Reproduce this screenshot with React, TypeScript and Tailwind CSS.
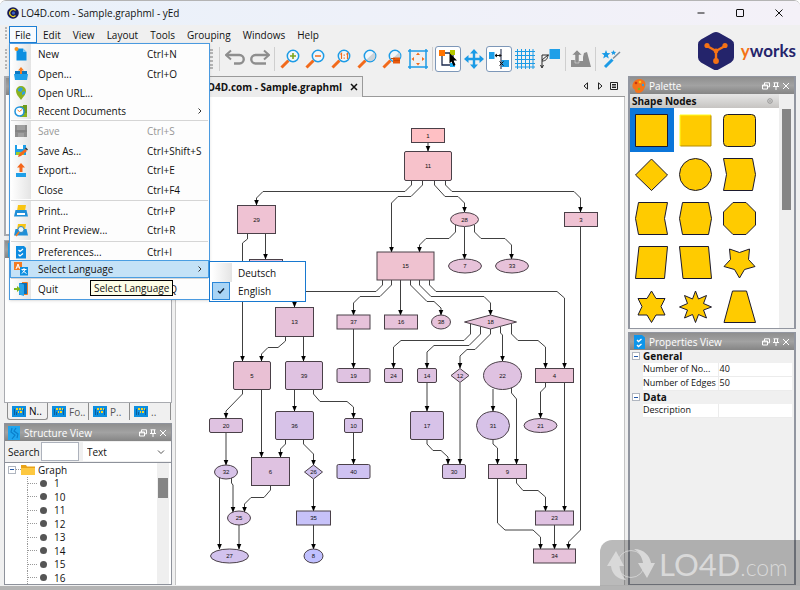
import { ReactNode } from "react";

type Shape = "rect" | "round" | "ellipse" | "diamond";

type GraphNode = {
  id: string;
  shape: Shape;
  x: number;
  y: number;
  w: number;
  h: number;
  fill: string;
};

// x and y are the centre of the node
const node = (
  id: string,
  shape: Shape,
  x: number,
  y: number,
  w: number,
  h: number,
  fill: string
): GraphNode => ({ id, shape, x, y, w, h, fill });

const NODES: GraphNode[] = [
  node("1", "rect", 428, 135.5, 33, 14, "#ffc0c4"),
  node("11", "round", 428, 166, 47, 29, "#f7c2cb"),
  node("29", "rect", 256.5, 219.5, 38, 28, "#efc2d3"),
  node("28", "ellipse", 464.5, 219.5, 28, 14, "#efc2d3"),
  node("3", "rect", 581, 219.5, 33, 14, "#efc2d3"),
  node("2", "rect", 266, 266.5, 33, 14, "#e7c2da"),
  node("15", "rect", 405.5, 266, 57, 28, "#efc2d0"),
  node("7", "ellipse", 465, 266, 33, 14, "#e7c2da"),
  node("33", "ellipse", 512, 266, 33, 14, "#e7c2da"),
  node("13", "rect", 294.5, 322, 38, 29, "#e7c2da"),
  node("37", "rect", 353.5, 322, 33, 14, "#e7c2da"),
  node("16", "rect", 401, 322, 33, 14, "#e7c2da"),
  node("38", "ellipse", 441, 322, 19, 14, "#e7c2da"),
  node("18", "diamond", 490.5, 322, 52, 14, "#e7c2da"),
  node("5", "round", 252, 375.5, 37, 28, "#e9c0d4"),
  node("39", "round", 304, 375.5, 37, 28, "#dfc2e1"),
  node("19", "round", 353.5, 375.5, 33, 14, "#dfc2e1"),
  node("24", "round", 393.5, 375.5, 18, 14, "#dfc2e1"),
  node("14", "round", 427, 375.5, 19, 14, "#dfc2e1"),
  node("12", "diamond", 460, 375.5, 18, 14, "#dfc2e1"),
  node("22", "ellipse", 502.5, 375.5, 38, 28, "#dfc2e1"),
  node("4", "rect", 554.5, 375.5, 38, 14, "#e9c0d4"),
  node("20", "round", 226, 425.5, 33, 14, "#dfc2e1"),
  node("36", "round", 294.5, 425.5, 38, 28, "#d7c2e8"),
  node("10", "round", 353.5, 425.5, 18, 14, "#d7c2e8"),
  node("17", "round", 427, 425.5, 33, 28, "#d7c2e8"),
  node("31", "ellipse", 493, 425.5, 33, 28, "#d7c2e8"),
  node("21", "ellipse", 540.5, 425.5, 33, 14, "#dfc2e1"),
  node("32", "ellipse", 226, 472, 23, 14, "#d7c2e8"),
  node("6", "rect", 270.5, 471.5, 38, 28, "#dfc2e1"),
  node("26", "diamond", 313.5, 472, 18, 14, "#d0c2ef"),
  node("40", "round", 353.5, 471.5, 33, 14, "#cfc2f2"),
  node("30", "round", 454, 471.5, 23, 14, "#d7c2e8"),
  node("9", "rect", 507.5, 471.5, 38, 14, "#e3c2de"),
  node("25", "ellipse", 239, 518, 23, 14, "#d9c2e6"),
  node("35", "rect", 313.5, 518, 34, 14, "#c7c2f9"),
  node("23", "rect", 554.5, 518, 38, 14, "#e0c2e2"),
  node("27", "ellipse", 229.5, 556, 38, 14, "#d2c2ed"),
  node("8", "ellipse", 313.5, 556, 19, 14, "#c0c0ff"),
  node("34", "rect", 554.5, 556, 42, 14, "#e7c2da"),
];

const EDGES = [
  "428,143 428,151",
  "411.5,181 411.5,185 405,191.5 263,191.5 256.5,198 256.5,205",
  "422.5,181 422.5,185 411,196.5 398,196.5 391.5,203 391.5,252",
  "434.5,181 434.5,185 445,196.5 458,196.5 464.5,203 464.5,212",
  "445.5,181 445.5,185 452,191.5 574,191.5 580.5,198 580.5,212",
  "455.5,225 455.5,232 449,238.5 426,238.5 419.5,245 419.5,252",
  "464.5,227 464.5,259",
  "474.5,225 474.5,232 481,238.5 505,238.5 511.5,245 511.5,259",
  "247.5,234 247.5,239 242.5,243 242.5,361",
  "265.5,234 265.5,259",
  "382.5,280 382.5,285 376,291.5 301,291.5 294.5,298 294.5,307",
  "391.5,280 391.5,285 380,296.5 360,296.5 353.5,303 353.5,315",
  "400.5,280 400.5,315",
  "410.5,280 410.5,285 427,301.5 434,301.5 441,308 441,315",
  "419.5,280 419.5,285 431,296.5 484,296.5 490.5,303 490.5,315",
  "429.5,280 429.5,285 436,291.5 557,291.5 564.5,298 564.5,368",
  "580.5,227 580.5,530 568.5,542 568.5,549",
  "285.5,337 285.5,341 278,347.5 268,347.5 261.5,354 261.5,361",
  "303.5,337 303.5,361",
  "353.5,329 353.5,368",
  "470.5,324 470.5,334 464,340.5 401,340.5 393.5,347 393.5,368",
  "480.5,327 480.5,334 469,345.5 434,345.5 427,352 427,368",
  "490.5,329 490.5,334 475,349.5 467,349.5 460,356 460,368",
  "500.5,327 500.5,333 502.5,335 502.5,361",
  "511.5,324 511.5,334 518,340.5 538,340.5 545.5,347 545.5,368",
  "242.5,390 242.5,394 226,411 226,418",
  "261.5,390 261.5,457",
  "294.5,390 294.5,411",
  "313.5,390 313.5,394 320,401.5 347,401.5 353.5,407 353.5,418",
  "226,433 226,465",
  "219.5,478 219.5,549",
  "231.5,478 231.5,483 233,485 233,512",
  "285.5,440 285.5,444 280.5,449 280.5,457",
  "303.5,440 303.5,444 313.5,454 313.5,465",
  "353.5,433 353.5,464",
  "313.5,479 313.5,511",
  "270.5,486 270.5,490 264,497.5 251,497.5 244.5,504 244.5,512",
  "239,525 239,549",
  "313.5,525 313.5,549",
  "427,383 427,411",
  "460,383 460,464",
  "427,440 427,444 433,450.5 441,450.5 448,457 448,464",
  "493,389 493,411",
  "511.5,388 511.5,393 516.5,399 516.5,464",
  "493,440 493,444 497.5,448 497.5,464",
  "545.5,383 545.5,387 540.5,392 540.5,418",
  "564.5,383 564.5,511",
  "497.5,479 497.5,523 505,530 533,530 540.5,537 540.5,549",
  "516.5,479 516.5,483 523,490.5 538,490.5 545.5,497 545.5,511",
  "554.5,525 554.5,549",
];

function NodeShape({ n }: { n: GraphNode }) {
  const common = { fill: n.fill, stroke: "#4a4048", strokeWidth: 1 };
  if (n.shape === "ellipse") {
    return <ellipse cx={n.x} cy={n.y} rx={n.w / 2} ry={n.h / 2} {...common} />;
  }
  if (n.shape === "diamond") {
    const hw = n.w / 2;
    const hh = n.h / 2;
    return (
      <path
        d={`M${n.x} ${n.y - hh} L${n.x + hw} ${n.y} L${n.x} ${n.y + hh} L${n.x - hw} ${n.y}Z`}
        {...common}
      />
    );
  }
  return (
    <rect
      x={n.x - n.w / 2}
      y={n.y - n.h / 2}
      width={n.w}
      height={n.h}
      rx={n.shape === "round" ? 1.5 : 0}
      {...common}
    />
  );
}

function GraphCanvas() {
  return (
    <svg viewBox="176 97 448 484" className="block w-[448px] h-[484px] shrink-0">
      <defs>
        <marker
          id="arrow"
          markerWidth="7"
          markerHeight="7"
          refX="5.5"
          refY="3"
          orient="auto"
          markerUnits="userSpaceOnUse"
        >
          <path d="M0 0.5 L6 3 L0 5.5Z" fill="#000" />
        </marker>
      </defs>
      {EDGES.map((points) => (
        <polyline
          key={points}
          points={points}
          fill="none"
          stroke="#404040"
          strokeWidth="1"
          markerEnd="url(#arrow)"
        />
      ))}
      {NODES.map((n) => (
        <g key={n.id}>
          <NodeShape n={n} />
          <text
            x={n.x}
            y={n.y + 2}
            textAnchor="middle"
            fill="#111"
            className="font-['Liberation_Sans',sans-serif] text-[6px]"
          >
            {n.id}
          </text>
        </g>
      ))}
    </svg>
  );
}

/* ---------- menu ---------- */

function MenuIcon({ name }: { name: string }) {
  const icons: Record<string, ReactNode> = {
    new: (
      <>
        <path d="M2.500 1.500H9L12.500 5v8.500h-10z" fill="#0d8fe0" />
        <path d="M9 1.500L12.500 5H9z" fill="#7cc8f5" />
        <circle cx="2.500" cy="2" r="2" fill="#f7941d" />
      </>
    ),
    open: (
      <>
        <path d="M1 4h12v9H1z" fill="#0a78c2" />
        <path d="M0 7h14l-1 6H1z" fill="#1f9fe8" />
        <path d="M7 0l3 3.500H8V7H6V3.500H4z" fill="#f47b20" />
      </>
    ),
    url: (
      <>
        <path d="M7 14C4 10 2 8 2 5a5 5 0 0 1 10 0c0 3-2 5-5 9z" fill="#8bb21f" />
        <path d="M4 3l3-2 2 2-2 3-3-1z" fill="#2f9fe0" />
        <path d="M8 6l3-1v3L8 9z" fill="#2f9fe0" />
      </>
    ),
    recent: (
      <>
        <path d="M6 2h4l3 2v9H6z" fill="#8bb21f" />
        <path d="M9 1h4v8H9z" fill="#6c9a1b" />
        <circle cx="5.500" cy="7.500" r="4.500" fill="#fff" stroke="#1f93dc" strokeWidth="1.500" />
        <path d="M3.500 6l2 1.500L8 5.500" fill="none" stroke="#f47b20" />
      </>
    ),
    save: (
      <>
        <path d="M1 1h12v12H1z" fill="#8d8d8d" />
        <path d="M3 1h8v5H3zM4 9h6v4H4z" fill="#a0a0a0" />
        <path d="M1 7h12" stroke="#7b7b7b" />
      </>
    ),
    saveas: (
      <>
        <path d="M1 1h11v10H1z" fill="#1f9fe8" />
        <path d="M3 1h6v4H3z" fill="#fff" />
        <path d="M2 8h8v3H2z" fill="#9ccb2b" />
        <path d="M4 13l1-3 6-5 2 2-6 5z" fill="#f4661b" />
        <path d="M11 4.500l1-1 2 2-1 1z" fill="#333" />
      </>
    ),
    export: (
      <>
        <path d="M2 10h10v4H2z" fill="#1f9fe8" />
        <path d="M7 0l4 4.500H8.500V9h-3V4.500H3z" fill="#f4661b" />
      </>
    ),
    print: (
      <>
        <path d="M4 1h8l-1 6H3z" fill="#f9c513" />
        <path d="M1.500 6h11l1.500 6.500H0z" fill="#1f8fd8" />
        <path d="M3 9h8v2H3z" fill="#fff" />
      </>
    ),
    preview: (
      <>
        <path d="M4 1h8l-1 6H3z" fill="#f9c513" />
        <path d="M1.500 6h11l1.500 6.500H0z" fill="#1f8fd8" />
        <circle cx="7" cy="6.500" r="3" fill="#e9f5fc" stroke="#2f86bd" />
        <path d="M5 9l-3 4" stroke="#f47b20" strokeWidth="1.500" />
      </>
    ),
    prefs: (
      <>
        <path d="M2 1h8l2 2v10.500H2z" fill="#0c8be0" />
        <path d="M4.500 5l1.500 1.500L9 4M4.500 9.500L6 11l3-2.500" fill="none" stroke="#fff" strokeWidth="1.200" />
      </>
    ),
    language: (
      <>
        <path d="M0 0h8v8H0z" fill="#f47b20" />
        <path d="M2 7l2-5 2 5M3 5h2" stroke="#fff" fill="none" />
        <path d="M6 5h8v8.500H6z" fill="#0d8fe0" />
        <path d="M7.500 7.500h5M10 6v1.500M8 11.500l3.500-4M8.500 8.500l4 3" stroke="#fff" fill="none" />
      </>
    ),
    quit: (
      <>
        <path d="M5 1h8v12H5z" fill="#0a6fb5" />
        <path d="M5 1l5 1.500V14L5 12.500z" fill="#29a4ea" />
        <path d="M8 .5h5.500v12H10" fill="none" stroke="#f47b20" />
        <path d="M0 6h3V4l3.500 3L3 10V8H0z" fill="#7fb61c" />
      </>
    ),
  };
  return (
    <svg viewBox="0 0 14 14" className="size-[14px]" aria-hidden="true">
      {icons[name]}
    </svg>
  );
}

function Chevron({ className }: { className: string }) {
  return (
    <svg viewBox="0 0 8 8" className={className} aria-hidden="true">
      <path d="M2.500 1.500l2.500 2.500-2.500 2.500" fill="none" stroke="#333" />
    </svg>
  );
}

type Item = {
  label: string;
  keys?: string;
  icon?: string;
  height: string;
  disabled?: boolean;
  sub?: boolean;
  active?: boolean;
};

const FILE_MENU: (Item | "sep")[] = [
  { label: "New", keys: "Ctrl+N", icon: "new", height: "h-[20px]" },
  { label: "Open...", keys: "Ctrl+O", icon: "open", height: "h-[19px]" },
  { label: "Open URL...", icon: "url", height: "h-[20px]" },
  { label: "Recent Documents", icon: "recent", height: "h-[16px]", sub: true },
  "sep",
  { label: "Save", keys: "Ctrl+S", icon: "save", height: "h-[20px]", disabled: true },
  { label: "Save As...", keys: "Ctrl+Shift+S", icon: "saveas", height: "h-[19px]" },
  { label: "Export...", keys: "Ctrl+E", icon: "export", height: "h-[20px]" },
  { label: "Close", keys: "Ctrl+F4", height: "h-[19px]" },
  "sep",
  { label: "Print...", keys: "Ctrl+P", icon: "print", height: "h-[19px]" },
  { label: "Print Preview...", keys: "Ctrl+R", icon: "preview", height: "h-[20px]" },
  "sep",
  { label: "Preferences...", keys: "Ctrl+I", icon: "prefs", height: "h-[19px]" },
  { label: "Select Language", icon: "language", height: "h-[16px]", sub: true, active: true },
  "sep",
  { label: "Quit", keys: "Ctrl+Q", icon: "quit", height: "h-[20px]" },
];

function LanguageMenu() {
  return (
    <div className="absolute left-[198px] top-0 z-30 w-[97px] border border-[#1879d0] bg-white py-px">
      <button className="flex h-[19px] w-full items-center">
        <span className="ml-0.5 h-full w-[20px] bg-linear-to-r from-white to-[#e4e4e4]" />
        <span className="pl-1.5">Deutsch</span>
      </button>
      <button className="flex h-[18px] w-full items-center">
        <span className="ml-0.5 flex h-full w-[18px] items-center justify-center border border-[#2a86d8] bg-[#a9d4f5]">
          <svg viewBox="0 0 8 8" className="size-2" aria-hidden="true">
            <path d="M1 4l2 2 4-4.500" fill="none" stroke="#12243a" strokeWidth="1.400" />
          </svg>
        </span>
        <span className="pl-2">English</span>
      </button>
    </div>
  );
}

function FileMenu() {
  return (
    <div className="absolute left-0 top-full z-20 w-[201px] border border-[#4a9ae0] bg-[#fdfdfd] px-px text-left shadow-sm">
      {FILE_MENU.map((item, i) =>
        item === "sep" ? (
          <div key={i} className="flex h-[2px] items-center">
            <div className="h-px w-full bg-[#d5d5d5]" />
          </div>
        ) : (
          <div key={i} className="relative">
            <button
              disabled={item.disabled}
              className={`flex w-full items-center ${item.height} ${
                item.active ? "bg-[#c4e2f7] outline outline-[#4a9ee2]" : ""
              } ${item.disabled ? "text-[#969696]" : ""}`}
            >
              <span
                className={`flex h-full w-[20px] items-center justify-center ${
                  item.active ? "" : "bg-linear-to-r from-white to-[#e4e4e4]"
                }`}
              >
                {item.icon && <MenuIcon name={item.icon} />}
              </span>
              <span className="w-[116px] pl-[7px] text-left whitespace-nowrap">{item.label}</span>
              <span className="flex-1 text-left whitespace-nowrap">{item.keys}</span>
              {item.sub && <Chevron className="mr-1 size-2" />}
            </button>
            {item.active && <LanguageMenu />}
          </div>
        )
      )}
      <div
        role="tooltip"
        className="absolute bottom-[3px] left-[80px] border border-black bg-[#fdfde6] px-[3px] leading-[14px] whitespace-nowrap"
      >
        Select Language
      </div>
    </div>
  );
}

/* ---------- toolbar ---------- */

function Tool({
  label,
  width = "w-[25px]",
  pressed,
  children,
}: {
  label: string;
  width?: string;
  pressed?: boolean;
  children: ReactNode;
}) {
  return (
    <button
      aria-label={label}
      className={`flex h-[26px] items-center justify-center ${width} ${
        pressed ? "rounded-[3px] border border-[#7d97b8] bg-white" : ""
      }`}
    >
      <svg viewBox="0 0 20 20" className="size-5 shrink-0" fill="none">
        {children}
      </svg>
    </button>
  );
}

function Magnifier({ children }: { children?: ReactNode }) {
  return (
    <>
      <path d="M1.500 18.500L8.500 11.500" stroke="#f26a1b" strokeWidth="3" />
      <circle cx="13" cy="7" r="5.700" fill="#f1f6fa" stroke="#1c9be6" strokeWidth="1.500" />
      {children}
    </>
  );
}

function Separator() {
  return <div className="mx-0.5 h-6 w-px bg-[#cfcfcf]" />;
}

function Toolbar() {
  return (
    <div className="flex h-[32px] items-center pl-[5px]">
      <div className="h-5 w-[204px] border-l-2 border-dotted border-[#b5b5b5]" />
      <div className="h-5 w-1 border-x-2 border-dotted border-[#b5b5b5]" />
      <div className="w-1" />
      <Separator />
      <Tool label="Undo">
        <path d="M2 6h12.500a3.700 3.700 0 0 1 0 8.500H9" stroke="#8e8e8e" strokeWidth="2.400" />
        <path d="M6 1.500L1 6l5 4.500" stroke="#8e8e8e" strokeWidth="2" />
      </Tool>
      <Tool label="Redo">
        <path d="M18 6H5.500a3.700 3.700 0 0 0 0 8.500H16" stroke="#8e8e8e" strokeWidth="2.400" />
        <path d="M14 1.500L19 6l-5 4.500" stroke="#8e8e8e" strokeWidth="2" />
      </Tool>
      <Separator />
      <Tool label="Zoom in">
        <Magnifier>
          <path d="M10 7h6M13 4v6" stroke="#7da51c" strokeWidth="1.600" />
        </Magnifier>
      </Tool>
      <Tool label="Zoom out" width="w-[26px]">
        <Magnifier>
          <path d="M10 7h6" stroke="#f26a1b" strokeWidth="1.600" />
        </Magnifier>
      </Tool>
      <Tool label="Zoom 1:1" width="w-[26px]">
        <Magnifier>
          <path d="M9.500 5.500l1-1v5.500M15.500 5.500l1-1v5.500M13.200 5.500v1.200M13.200 8.500v1.200" stroke="#f26a1b" strokeWidth="1.200" />
        </Magnifier>
      </Tool>
      <Tool label="Zoom">
        <Magnifier>
          <path d="M17 3.500A5 5 0 0 1 9.500 10.500z" fill="#cdd3d8" />
        </Magnifier>
      </Tool>
      <Tool label="Zoom to selection" width="w-[26px]">
        <Magnifier>
          <path d="M17 3.500A5 5 0 0 1 9.500 10.500z" fill="#cdd3d8" />
          <path d="M11 8.500h7v6h-7z" fill="#e8590c" />
          <path d="M9 9.500h4M12 11.500h6" stroke="#c94b08" />
        </Magnifier>
      </Tool>
      <Tool label="Fit content">
        <path d="M2 0v20M18 0v20M0 2h20M0 18h20" stroke="#1c9be6" strokeWidth="1.500" />
        <path
          d="M10 3.500l2 2.500H8zM10 16.500l2-2.500H8zM3.500 10L6 8v4zM16.500 10L14 8v4z"
          fill="#f26a1b"
        />
      </Tool>
      <Separator />
      <Tool label="Edit mode" width="w-[26px]" pressed>
        <path d="M4 4h11v12H4z" stroke="#1d2b4d" strokeWidth="1.300" />
        <path d="M1 1h6v6H1z" fill="#ff7300" />
        <path d="M12 1h5v5h-5z" fill="#b7c800" />
        <path d="M12 14h5v4h-5z" fill="#1fb0f5" />
        <path d="M11.500 4l7.500 7.500h-3.500l2 4.500-2 1-2-4.500-2 2z" fill="#000" />
      </Tool>
      <Tool label="Navigation mode">
        <path d="M10 3v14M3 10h14" stroke="#1c9be6" strokeWidth="2.400" />
        <path
          d="M10 0l4 4.500H6zM10 20l4-4.500H6zM0 10l4.500-4v8zM20 10l-4.500-4v8z"
          fill="#1c9be6"
        />
      </Tool>
      <Tool label="Snap lines" width="w-[26px]" pressed>
        <path d="M0 3h5.500v7H0zM12.500 11H20v7h-7.500z" fill="#1f9fe8" />
        <path d="M12 0v20" stroke="#26314d" strokeWidth="1.100" />
        <path d="M6 6.500h6M8 5l-2 1.500L8 8M10.500 5l1.500 1.500L10.500 8" stroke="#111" />
        <path d="M10.500 12.500l4 4M14.500 12.500l-4 4" stroke="#111" />
      </Tool>
      <Tool label="Grid">
        <path
          d="M2.500 0v20M6.500 0v20M10.500 0v20M14.500 0v20M18 0v20M0 2.500h20M0 6.500h20M0 10.500h20M0 14.500h20M0 18h20"
          stroke="#1c9be6"
        />
      </Tool>
      <Tool label="Orthogonal edges" width="w-[26px]">
        <path d="M9.500 0H20v10H9.500z" fill="#1f9fe8" />
        <path d="M9 6H2v12M.5 16L2 19l1.500-3M2 12c4 0 5.500-2 6-6M2 11l6-5" stroke="#2a2a2a" />
      </Tool>
      <Separator />
      <Tool label="Layout">
        <path d="M0 11h7v7H0zM7 12h6v6H7z" fill="#8d8d8d" />
        <path d="M13 4l3-1 4 15h-8V8z" fill="#8d8d8d" />
        <path d="M6 1l5 5H8v8H4V6H1z" fill="#8d8d8d" stroke="#efefef" strokeWidth="0.500" />
      </Tool>
      <Separator />
      <Tool label="Wizard">
        <path d="M4 18L11.500 10.500" stroke="#1c9be6" strokeWidth="3" />
        <path d="M12 9.500l7-6.500" stroke="#7a8b99" strokeWidth="1.500" />
        <path
          d="M5 1l1.200 3 3.200.2-2.500 2L7.800 9.500 5 7.700 2.200 9.500l.9-3.300-2.500-2L3.800 4zM12.500 1l.8 1.700 1.900.2-1.400 1.300.4 1.900-1.700-1-1.700 1 .4-1.900-1.400-1.300 1.900-.2z"
          fill="#1c9be6"
        />
      </Tool>
    </div>
  );
}

function Logo() {
  return (
    <div className="flex items-center gap-[6px] pr-1">
      <svg viewBox="0 0 38 40" className="h-10 w-[38px]" aria-hidden="true">
        <path
          d="M16 1.800q3-1.700 6 0l12 6.700q3 1.800 3 5v13q0 3.200-3 5l-12 6.700q-3 1.700-6 0l-12-6.700q-3-1.800-3-5v-13q0-3.200 3-5z"
          fill="#24246b"
        />
        <path d="M19 20v10M19 20l-9-5M19 20l9-5" stroke="#f47216" strokeWidth="2.400" />
        <circle cx="10" cy="14.500" r="2.600" fill="#f47216" />
        <circle cx="28" cy="14.500" r="2.600" fill="#f47216" />
        <circle cx="19" cy="30" r="2.900" fill="#f47216" />
        <circle cx="19" cy="20" r="2.400" fill="#f47216" />
      </svg>
      <span className="font-[Lato,sans-serif] text-[17px] leading-6 font-bold text-[#24246b]">
        <span className="text-[#f47216]">y</span>works
      </span>
    </div>
  );
}

/* ---------- docked panels ---------- */

function PanelHeader({ title, icon }: { title: string; icon: ReactNode }) {
  return (
    <div className="flex h-[17px] shrink-0 items-center bg-linear-to-b from-[#8f8f8f] via-[#a2a2a2] to-[#858585] pr-1 pl-[2px] text-white">
      <svg viewBox="0 0 14 14" className="size-[14px] shrink-0" aria-hidden="true">
        {icon}
      </svg>
      <h2 className="flex-1 truncate pl-[3px] text-[10px]">{title}</h2>
      <button aria-label="Float" className="w-[10px]">
        <svg viewBox="0 0 8 8" className="size-2" fill="none" stroke="#fff">
          <path d="M2.500 3V.8h5v4H5.500M.5 3h5v4h-5zM.5 3.800h5" />
        </svg>
      </button>
      <button aria-label="Pin" className="w-[10px]">
        <svg viewBox="0 0 8 8" className="size-2" fill="none" stroke="#fff">
          <path d="M1.500.8h5M2.500 1v3.500M5.500 1v3.500M1 4.500h6M4 4.500V8" />
        </svg>
      </button>
      <button aria-label="Close" className="w-2">
        <svg viewBox="0 0 8 8" className="size-2" fill="none" stroke="#fff">
          <path d="M1 1l6 6M7 1L1 7" />
        </svg>
      </button>
    </div>
  );
}

const networkIcon = (
  <>
    <path d="M1 0h12v14H1z" fill="#1fa5ee" />
    <path d="M5 2l-1 4 4 3-3 4M9 2L7 5l4 3-1 4" stroke="#0a7fcb" fill="none" strokeWidth="1.200" />
  </>
);

const checklistIcon = (
  <>
    <path d="M2 0h8l3 2.500V14H2z" fill="#0d95ea" />
    <path d="M5 5l1.500 1.500L9.500 4M5 10l1.500 1.500L9.500 9" fill="none" stroke="#fff" strokeWidth="1.300" />
  </>
);

const paletteIcon = (
  <>
    <path d="M7.500 0C11 0 14 2.500 13.500 6c-.2 2-1 2.500-1.500 4-.5 2-3 4-6 4-2 0-3-1-3-2.500S1 10 .5 8C0 4 3 0 7.500 0z" fill="#f4731c" />
    <circle cx="4" cy="4" r="1.300" fill="#c9380e" />
    <circle cx="8" cy="3" r="1.300" fill="#f9c513" />
    <circle cx="11" cy="6" r="1.200" fill="#2f9fe0" />
    <circle cx="7" cy="10" r="1.300" fill="#7fb61c" />
  </>
);

const TABS = ["N..", "Fo..", "P..", ".."];

function DockTabs() {
  return (
    <div className="flex h-[20px] items-start pl-[3px]">
      {TABS.map((tab, i) => (
        <button
          key={tab}
          className={`flex h-[17px] w-[41px] shrink-0 items-center gap-[3px] overflow-hidden pl-1 ${
            i === 0
              ? "rounded-b-[3px] border border-t-0 border-[#8d8d8d] text-black"
              : "border-r border-[#8d8d8d] text-[#555]"
          }`}
        >
          <svg viewBox="0 0 14 11" className="h-[11px] w-[14px] shrink-0" aria-hidden="true">
            <path d="M0 0h14v11H0z" fill="#0d8fe0" />
            <path d="M2 3h1v6H2zM4 6h1v3H4zM11 3h1v6h-1z" fill="#0a5f9f" />
            <path d="M4 2h2v2H4zM7 2h2v2H7zM10 2h1v2h-1zM6 5h1v2H6zM8 5h2v2H8z" fill="#f9d423" />
          </svg>
          {tab}
        </button>
      ))}
    </div>
  );
}

const TREE = ["1", "10", "11", "12", "13", "14", "15", "16"];

function StructureView() {
  return (
    <section className="flex h-[162px] flex-col border border-[#8e929b]">
      <PanelHeader title="Structure View" icon={networkIcon} />
      <div className="flex h-[21px] shrink-0 items-center pl-[3px]">
        <label htmlFor="search" className="w-[33px] font-medium">
          Search
        </label>
        <input id="search" className="h-[19px] w-[38px] border border-[#adb2bc] bg-white" />
        <div className="relative ml-1 flex-1">
          <select
            aria-label="Search in"
            className="h-[19px] w-full appearance-none bg-white pl-1 font-medium"
          >
            <option>Text</option>
          </select>
          <svg viewBox="0 0 8 8" className="pointer-events-none absolute top-1.5 right-1.5 size-2">
            <path d="M1 2.500l3 3 3-3" fill="none" stroke="#555" />
          </svg>
        </div>
      </div>
      <div className="flex min-h-0 flex-1 border-t border-[#8e929b] bg-white font-medium">
        <ul className="flex flex-1 flex-col justify-between pl-[3px]">
          <li className="flex h-[13px] items-center">
            <span className="flex size-2 items-center justify-center border border-[#b0b6c0]">
              <span className="h-px w-1 bg-[#2458a8]" />
            </span>
            <span className="w-[5px] border-t border-dotted border-[#999]" />
            <svg viewBox="0 0 14 12" className="h-3 w-[14px]" aria-hidden="true">
              <path d="M0 1h5l1 1.500h8V11H0z" fill="#e9a318" />
              <path d="M0 4h14v7H0z" fill="#fdc840" />
            </svg>
            <span className="pl-[3px]">Graph</span>
          </li>
          {TREE.map((id) => (
            <li key={id} className="ml-[19px] flex h-[13px] items-center border-l border-dotted border-[#999]">
              <span className="w-[9px] border-t border-dotted border-[#999]" />
              <span className="ml-[3px] size-[7px] rounded-full bg-[#555]" />
              <span className="pl-[7px]">{id}</span>
            </li>
          ))}
        </ul>
        <div className="mr-0.5 w-3 bg-[#efefef] px-px pt-[15px]">
          <div className="h-5 bg-[#858585]" />
        </div>
      </div>
    </section>
  );
}

function LeftDock() {
  return (
    <aside className="flex w-[168px] shrink-0 flex-col">
      <section className="h-[160px] border-2 border-[#a9abb0] bg-white">
        <PanelHeader title="Overview" icon={networkIcon} />
      </section>
      <div className="h-1" />
      <section className="min-h-[160px] flex-1 border border-[#a9abb0] bg-white">
        <PanelHeader title="Neighborhood" icon={networkIcon} />
      </section>
      <DockTabs />
      <StructureView />
    </aside>
  );
}

const PALETTE: ReactNode[] = [
  <path key="rect" d="M.5 .5h32v32H.5z" />,
  <g key="bevel" stroke="none">
    <path d="M1 1h31v31H1z" />
    <path d="M1 32V1h31" stroke="#ffff20" />
    <path d="M1.500 32H32V1.500" stroke="#b58c00" />
  </g>,
  <rect key="round" x=".5" y=".5" width="32" height="32" rx="4" />,
  <path key="diamond" d="M16.500 1L32.500 17L16.500 32.500L.5 17Z" />,
  <circle key="circle" cx="16.500" cy="16.500" r="16" />,
  <path key="flag" d="M.5 .5h29L32.500 16.500l-3 16H.5L3.500 16.500z" />,
  <path key="flagl" d="M3.500 .5H32.500L29.500 16.500l3 16H3.500L.5 16.500z" />,
  <path key="hex" d="M3.500 .5H29.500L32.500 16.500l-3 16H3.500L.5 16.500z" />,
  <path key="oct" d="M10 .5H23L32.500 10V23L23 32.500H10L.5 23V10Z" />,
  <path key="par" d="M4 .5H32.500L29.500 32.500H.5Z" />,
  <path key="parl" d="M.5 .5H29.500L32.500 32.500H4Z" />,
  <path
    key="star5"
    d="M6.500 3L16.500 6.500L26.500 3L25.500 13.500L32 20.500L21.500 23.500L16.500 32L11.500 23.500L1 20.500L7.500 13.500Z"
  />,
  <path key="star6" d="M16.500 1L21 8.500L30 8.500L26 16.500L30 25L21 25L16.500 32.500L12 25L3 25L7 16.500L3 8.500L12 8.500Z" />,
  <path
    key="star8"
    d="M16.500 1L19.500 9L27.500 5.500L24.500 13.500L32.500 17L24.500 20L27.500 28L19.500 24.500L16.500 32.500L13.500 24.500L5.500 28L8.500 20L.5 17L8.500 13.500L5.500 5.500L13.500 9Z"
  />,
  <path key="trap" d="M9.500 1H23.500L32.500 32.500H1Z" />,
];

function PalettePanel() {
  return (
    <section className="border-x-2 border-y border-[#9296a0] bg-white">
      <PanelHeader title="Palette" icon={paletteIcon} />
      <div className="flex">
        <div className="flex-1">
          <div className="flex h-[14px] items-center justify-between bg-linear-to-b from-[#e6e6e6] to-[#c6c4c2] pr-1.5 pl-[2px]">
            <h3 className="text-[10px] leading-3 font-bold">Shape Nodes</h3>
            <svg viewBox="0 0 6 6" className="size-1.5" aria-hidden="true">
              <circle cx="3" cy="3" r="2.300" fill="none" stroke="#888" strokeWidth="0.800" />
              <circle cx="3" cy="3" r="0.800" fill="#888" />
            </svg>
          </div>
          <div className="grid w-[132px] grid-cols-3">
            {PALETTE.map((shape, i) => (
              <button
                key={i}
                aria-label={`Shape ${i + 1}`}
                className={`flex h-[44px] items-center pl-[5px] ${i === 0 ? "bg-[#0b76da]" : ""}`}
              >
                <svg viewBox="0 0 33 33" className="size-[33px]" fill="#ffcb00" stroke="#1c1a2e">
                  {shape}
                </svg>
              </button>
            ))}
          </div>
        </div>
        <div className="w-[15px] bg-[#efefef] px-[3px] pt-[15px]">
          <div className="h-[101px] bg-[#858585]" />
        </div>
      </div>
    </section>
  );
}

function GroupRow({ label }: { label: string }) {
  return (
    <tr>
      <td className="w-[13px] pl-0.5">
        <span className="flex size-2 items-center justify-center border border-[#b0b6c0] bg-white">
          <span className="h-px w-1 bg-[#2458a8]" />
        </span>
      </td>
      <th colSpan={2} className="text-left text-[10px] font-bold">
        {label}
      </th>
    </tr>
  );
}

function PropertyRow({ label, value }: { label: string; value: string }) {
  return (
    <tr>
      <td />
      <th className="w-[75px] border-r border-b border-[#ececec] bg-white text-left font-medium whitespace-nowrap">
        {label}
      </th>
      <td className="border-b border-[#ececec] bg-white pl-px font-medium">{value}</td>
    </tr>
  );
}

function PropertiesPanel() {
  return (
    <section className="flex-1 border-x-2 border-y border-[#9296a0]">
      <PanelHeader title="Properties View" icon={checklistIcon} />
      <div className="pr-0.5">
        <table className="h-[68px] w-full table-fixed border-collapse text-[9px] leading-3">
          <colgroup>
            <col className="w-[13px]" />
            <col className="w-[75px]" />
            <col />
          </colgroup>
          <tbody>
            <GroupRow label="General" />
            <PropertyRow label="Number of No..." value="40" />
            <PropertyRow label="Number of Edges" value="50" />
            <GroupRow label="Data" />
            <PropertyRow label="Description" value="" />
          </tbody>
        </table>
      </div>
    </section>
  );
}

function EditorArea() {
  return (
    <main className="flex min-w-0 flex-1 flex-col">
      <div className="flex h-[21px] shrink-0">
        <div className="flex w-[188px] items-center justify-end gap-2 border-t border-r border-[#9a9a9a] bg-[#ececec] pr-1">
          <span className="text-[10px] font-bold whitespace-nowrap">LO4D.com - Sample.graphml</span>
          <button aria-label="Close tab">
            <svg viewBox="0 0 8 8" className="size-2" stroke="#111" strokeWidth="1.500">
              <path d="M1 1l6 6M7 1L1 7" />
            </svg>
          </button>
        </div>
        <div className="flex flex-1 items-center justify-end gap-[6px] border-b border-[#9a9a9a] pr-[7px]">
          <button aria-label="Previous">
            <svg viewBox="0 0 8 8" className="size-2" fill="none" stroke="#222">
              <path d="M5.500 .8v6.400L2 4z" />
            </svg>
          </button>
          <button aria-label="Next">
            <svg viewBox="0 0 8 8" className="size-2" fill="none" stroke="#222">
              <path d="M2.500 .8v6.400L6 4z" />
            </svg>
          </button>
          <button aria-label="List documents">
            <svg viewBox="0 0 8 8" className="size-2" fill="none" stroke="#222">
              <path d="M.5.5h7v7h-7zM2 2.500h4M2 4h4M2 5.500h4" />
            </svg>
          </button>
        </div>
      </div>
      <div className="flex-1 overflow-hidden border-r border-l border-[#c4c4c4] bg-white">
        <GraphCanvas />
      </div>
    </main>
  );
}

function TitleBar() {
  return (
    <header className="flex h-[24px] items-center bg-linear-to-r from-[#e9f1fa] to-[#f4f1f8] pl-[7px]">
      <svg viewBox="0 0 12 12" className="size-3" aria-hidden="true">
        <circle cx="6" cy="6" r="5.800" fill="#191c55" />
        <path d="M8.500 3.500a3.400 3.400 0 1 0 0 5" fill="none" stroke="#e9d51f" strokeWidth="1.200" />
        <circle cx="6.500" cy="6" r="1.600" fill="#3a63c8" />
      </svg>
      <h1 className="flex-1 pl-[2px]">LO4D.com - Sample.graphml - yEd</h1>
      <div className="flex gap-[31px] pr-[17px]">
        {["M.5 4h7", "M1 .5h6q.5 0 .5.5v6q0 .5-.5.5H1q-.5 0-.5-.5V1q0-.5.5-.5z", "M.5.5l7 7M7.500.5l-7 7"].map(
          (d, i) => (
            <button key={d} aria-label={["Minimize", "Maximize", "Close"][i]}>
              <svg viewBox="0 0 8 8" className="size-2" fill="none" stroke="#111">
                <path d={d} />
              </svg>
            </button>
          )
        )}
      </div>
    </header>
  );
}

const MENUS = ["Edit", "View", "Layout", "Tools", "Grouping", "Windows", "Help"];

function MenuBar() {
  return (
    <nav className="flex h-[18px] items-end pl-[5px]">
      <div className="mb-1 h-3 w-1 border-l-2 border-dotted border-[#b5b5b5]" />
      <div className="relative">
        <button className="block h-[17px] w-[28px] border border-[#1c7fd6] bg-[#f7fbff]">File</button>
        <FileMenu />
      </div>
      {MENUS.map((m) => (
        <button key={m} className="h-[17px] px-[6px]">
          {m}
        </button>
      ))}
    </nav>
  );
}

function Watermark() {
  return (
    <div className="absolute right-0 -bottom-1 z-40 flex h-[50px] w-[200px] items-center rounded-tl-[12px] bg-black/27 pl-[7px] text-[#d9d9d9]">
      <svg viewBox="0 0 48 36" className="h-9 w-12 shrink-0" fill="currentColor" aria-hidden="true">
        <path d="M9 4L17 19H12.500C13 26 17 31 19 33C11 32 5 28 4 19H0Z" />
        <path d="M27 2C37 2 43 9 44 16H48L40 31L31 16H36C35 10 32 5 27 2Z" />
        <circle cx="24" cy="17" r="13.500" fill="none" stroke="currentColor" strokeWidth="0.800" />
      </svg>
      <span className="pl-1 font-[Lato,sans-serif] text-[31px] leading-10 whitespace-nowrap">
        LO4D<span className="text-[23px] font-light">.com</span>
      </span>
    </div>
  );
}

export default function App() {
  return (
    <div className="relative flex min-h-screen flex-col overflow-hidden rounded-t-[6px] border-t border-b-4 border-[#b4b4b4] bg-[#f0f0f0] font-['Open_Sans',sans-serif] text-[10px] leading-[14px] text-[#111]">
      <TitleBar />
      <div className="flex items-center">
        <div className="flex-1 pb-px">
          <MenuBar />
          <Toolbar />
        </div>
        <Logo />
      </div>
      <div className="flex flex-1 px-[4px] pb-px">
        <LeftDock />
        <div className="w-[3px]" />
        <EditorArea />
        <div className="w-[3px]" />
        <aside className="flex w-[168px] shrink-0 flex-col gap-[3px]">
          <PalettePanel />
          <PropertiesPanel />
        </aside>
      </div>
      <Watermark />
    </div>
  );
}
